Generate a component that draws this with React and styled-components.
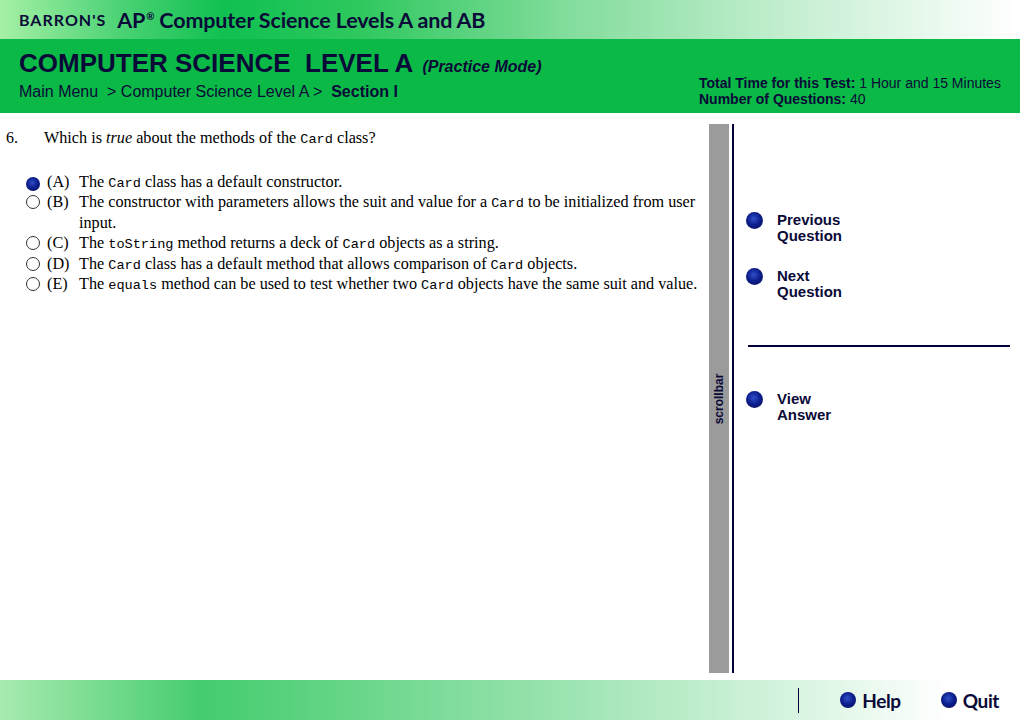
import React from "react";
import styled, { createGlobalStyle } from "styled-components";

const GlobalStyle = createGlobalStyle`
    html, body {
        margin: 0;
        padding: 0;
        background: #fff;
    }
    body {
        font-family: "Liberation Sans", Arial, sans-serif;
        color: #0a0a38;
    }
`;

const Page = styled.div`
    width: 1020px;
    height: 720px;
    display: flex;
    flex-direction: column;
    overflow: hidden;
`;

const TitleBar = styled.div`
    height: 39px;
    display: flex;
    align-items: center;
    padding-left: 19px;
    background: linear-gradient(90deg, #a6f0a6 0%, #4ad274 12%, #10c050 22%, #2ec85e 35%, #80dc9a 55%, #c6efd2 78%, #ffffff 100%);
    font-family: Lato, "Open Sans", sans-serif;
    font-weight: 700;
    color: #0a0a38;
`;

const Brand = styled.span`
    font-size: 16px;
    text-transform: uppercase;
    letter-spacing: 1px;
    margin-right: 11px;
`;

const TitleText = styled.span`
    font-size: 21.5px;
    letter-spacing: -0.15px;

    sup {
        font-size: 10px;
        vertical-align: 8px;
        margin: 0 5px 0 1px;
    }
`;

const Band = styled.div`
    height: 74px;
    box-sizing: border-box;
    background: #0ab946;
    display: flex;
    justify-content: space-between;
    align-items: flex-end;
    padding: 13px 18px 6px 19px;
`;

const BandLeft = styled.div`
    display: flex;
    flex-direction: column;
    margin-bottom: 6px;
`;

const Heading = styled.div`
    font-size: 26px;
    font-weight: 700;
    line-height: 30px;
    white-space: pre;

    em {
        font-size: 16px;
        margin-left: 9px;
    }
`;

const Crumbs = styled.div`
    font-size: 16px;
    line-height: 18px;
    margin-top: 1px;
    white-space: pre;

    b {
        font-weight: 700;
    }
`;

const Stats = styled.div`
    font-size: 14px;
    line-height: 16px;
    width: 303px;
    white-space: nowrap;
`;

const Main = styled.div`
    flex: 1;
    display: flex;
    min-height: 0;
`;

const Content = styled.div`
    width: 709px;
    box-sizing: border-box;
    padding: 15px 10px 0 6px;
    font-family: "Liberation Serif", "Times New Roman", serif;
    font-size: 16.2px;
    color: #000;
`;

const QuestionRow = styled.div`
    display: flex;
    line-height: 20px;
    margin-bottom: 24px;
`;

const Number = styled.span`
    width: 38px;
    font-size: 16px;
`;

const Code = styled.code`
    font-family: "Liberation Mono", "Courier New", monospace;
    font-size: 13.6px;
    line-height: 1;
`;

const Options = styled.div`
    display: flex;
    flex-direction: column;
    padding-left: 20px;
`;

const Option = styled.div`
    display: flex;
    align-items: flex-start;
    line-height: 20.4px;
`;

const Radio = styled.span`
    width: 14px;
    height: 14px;
    margin-top: ${(p) => (p.checked ? "5px" : "3px")};
    margin-right: 7px;
    flex: none;
    box-sizing: border-box;
    border-radius: 50%;
    border: ${(p) => (p.checked ? "none" : "1px solid #333")};
    background: ${(p) =>
        p.checked
            ? "radial-gradient(circle at 45% 40%, #3050c8 0%, #0d1f8f 45%, #020a50 100%)"
            : "#fff"};
`;

const Letter = styled.span`
    width: 32px;
    flex: none;
`;

const OptionText = styled.span`
    flex: 1;
`;

const Scrollbar = styled.div`
    width: 20px;
    margin: 11px 0 7px;
    background: #9b9b9b;
    display: flex;
    align-items: center;
    justify-content: center;
`;

const ScrollLabel = styled.span`
    transform: rotate(-90deg);
    font-size: 12px;
    font-weight: 700;
    color: #0a0a38;
    white-space: nowrap;
`;

const Divider = styled.div`
    width: 2px;
    margin: 11px 0 7px 3px;
    background: #02023a;
`;

const Side = styled.div`
    flex: 1;
    display: flex;
    flex-direction: column;
    padding: 99px 10px 0 12px;
`;

const NavButton = styled.div`
    display: flex;
    align-items: flex-start;
    gap: 14px;
    font-size: 15px;
    font-weight: 700;
    line-height: 16px;
    margin-bottom: ${(p) => p.gap || "0"};
`;

const Ball = styled.span`
    width: ${(p) => p.size || 17}px;
    height: ${(p) => p.size || 17}px;
    flex: none;
    border-radius: 50%;
    background: radial-gradient(circle at 45% 40%, #3050c8 0%, #0d1f8f 45%, #020a50 100%);
`;

const Rule = styled.div`
    height: 2px;
    background: #02023a;
    margin: 0 0 44px 2px;
`;

const Footer = styled.div`
    height: 40px;
    display: flex;
    align-items: center;
    justify-content: flex-end;
    padding-right: 21px;
    background: linear-gradient(90deg, #a8eab0 0%, #44cc6e 20%, #8ee0a6 50%, #c8f0d4 72%, #ffffff 93%);
    font-family: Lato, "Open Sans", sans-serif;
`;

const FooterLine = styled.div`
    width: 1px;
    height: 25px;
    background: #02023a;
    margin-right: 41px;
`;

const FooterButton = styled.div`
    display: flex;
    align-items: center;
    gap: 6px;
    font-size: 19px;
    font-weight: 700;
    letter-spacing: -0.4px;
    color: #0a0a38;
    margin-left: ${(p) => p.offset || "0"};
`;

const options = [
    ["(A)", <>The <Code>Card</Code> class has a default constructor.</>],
    ["(B)", <>The constructor with parameters allows the suit and value for a <Code>Card</Code> to be initialized from user input.</>],
    ["(C)", <>The <Code>toString</Code> method returns a deck of <Code>Card</Code> objects as a string.</>],
    ["(D)", <>The <Code>Card</Code> class has a default method that allows comparison of <Code>Card</Code> objects.</>],
    ["(E)", <>The <Code>equals</Code> method can be used to test whether two <Code>Card</Code> objects have the same suit and value.</>],
];

const App = () => {
    return (
        <Page>
            <GlobalStyle />
            <TitleBar>
                <Brand>Barron's</Brand>
                <TitleText>AP<sup>®</sup>Computer Science Levels A and AB</TitleText>
            </TitleBar>
            <Band>
                <BandLeft>
                    <Heading>COMPUTER SCIENCE  LEVEL A<em>(Practice Mode)</em></Heading>
                    <Crumbs>Main Menu  &gt; Computer Science Level A &gt;  <b>Section I</b></Crumbs>
                </BandLeft>
                <Stats>
                    <div><b>Total Time for this Test:</b> 1 Hour and 15 Minutes</div>
                    <div><b>Number of Questions:</b> 40</div>
                </Stats>
            </Band>
            <Main>
                <Content>
                    <QuestionRow>
                        <Number>6.</Number>
                        <span>Which is <i>true</i> about the methods of the <Code>Card</Code> class?</span>
                    </QuestionRow>
                    <Options>
                        {options.map(([letter, text], i) => (
                            <Option key={letter}>
                                <Radio checked={i === 0} />
                                <Letter>{letter}</Letter>
                                <OptionText>{text}</OptionText>
                            </Option>
                        ))}
                    </Options>
                </Content>
                <Scrollbar>
                    <ScrollLabel>scrollbar</ScrollLabel>
                </Scrollbar>
                <Divider />
                <Side>
                    <NavButton gap="24px">
                        <Ball />
                        <span>Previous<br />Question</span>
                    </NavButton>
                    <NavButton gap="45px">
                        <Ball />
                        <span>Next<br />Question</span>
                    </NavButton>
                    <Rule />
                    <NavButton>
                        <Ball />
                        <span>View<br />Answer</span>
                    </NavButton>
                </Side>
            </Main>
            <Footer>
                <FooterLine />
                <FooterButton>
                    <Ball size={16} />
                    Help
                </FooterButton>
                <FooterButton offset="40px">
                    <Ball size={16} />
                    Quit
                </FooterButton>
            </Footer>
        </Page>
    );
};

export default App;
